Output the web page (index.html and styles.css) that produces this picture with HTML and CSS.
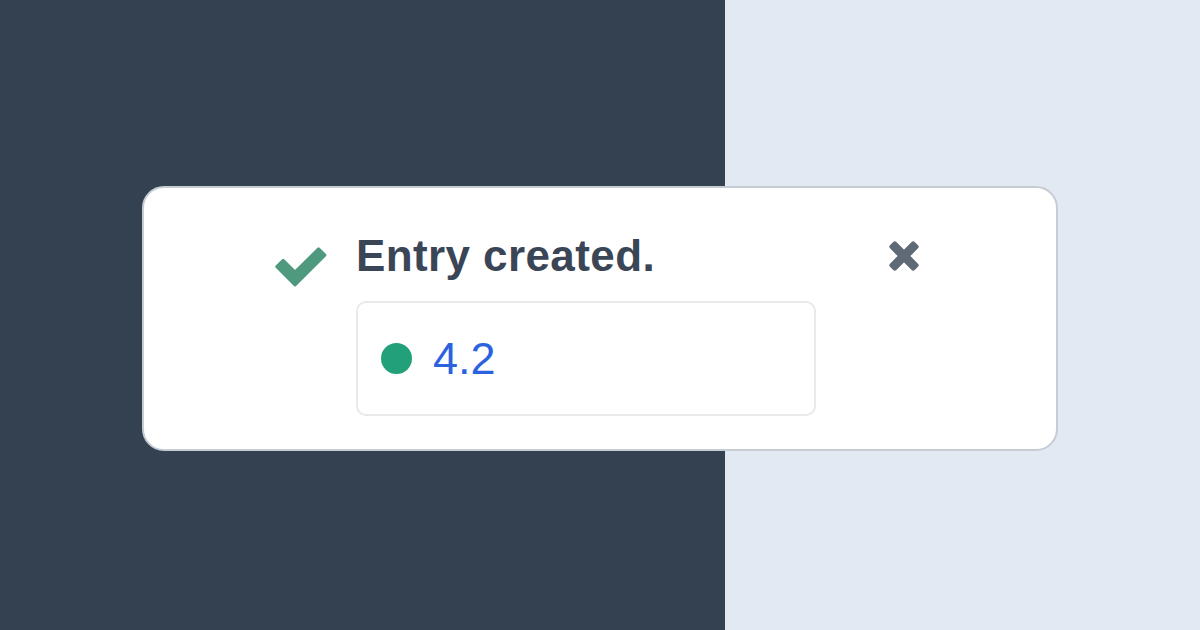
FILE: index.html
```html
<!DOCTYPE html>
<html lang="en">
<head>
<meta charset="utf-8">
<title>Entry created</title>
<link rel="stylesheet" href="styles.css">
</head>
<body>
<div class="toast">
  <svg class="check" width="58" height="50" viewBox="0 0 58 50" aria-hidden="true">
    <polygon points="13.18,20.32 25,32.14 48.52,8.82 54.88,15.18 25,44.96 6.82,26.68" fill="#4f9a7f" stroke="#4f9a7f" stroke-width="3" stroke-linejoin="round"/>
  </svg>
  <div class="content">
    <div class="title">Entry created.</div>
    <div class="entry">
      <span class="dot"></span>
      <span class="value">4.2</span>
    </div>
  </div>
  <svg class="close" width="32" height="32" viewBox="0 0 32 32" aria-hidden="true">
    <rect x="-1.5" y="11.5" width="35" height="9" rx="2.2" fill="#5f6a76" transform="rotate(45 16 16)"/>
    <rect x="-1.5" y="11.5" width="35" height="9" rx="2.2" fill="#5f6a76" transform="rotate(-45 16 16)"/>
  </svg>
</div>
</body>
</html>
```

FILE: styles.css
```css
html, body {
  margin: 0;
  padding: 0;
}

body {
  width: 1200px;
  height: 630px;
  overflow: hidden;
  background: linear-gradient(to right, #334150 0, #334150 725px, #e2e9f3 725px, #e2e9f3 100%);
  display: flex;
  align-items: center;
  justify-content: center;
  font-family: "Liberation Sans", Arial, sans-serif;
}

.toast {
  box-sizing: border-box;
  width: 916px;
  height: 265px;
  margin-top: 7px;
  background: #ffffff;
  border: 2px solid #c6ccd4;
  border-radius: 22px;
  padding: 42px 136px 33px 126px;
  display: flex;
  align-items: flex-start;
}

.check {
  flex: none;
  margin-top: 10px;
  margin-right: 28px;
}

.content {
  width: 460px;
  display: flex;
  flex-direction: column;
}

.title {
  font-size: 44px;
  line-height: 52px;
  font-weight: 700;
  color: #3a4656;
  letter-spacing: 0.4px;
  margin-bottom: 19px;
}

.entry {
  box-sizing: border-box;
  height: 115px;
  border: 2px solid #e8e9eb;
  border-radius: 10px;
  padding-left: 23px;
  display: flex;
  align-items: center;
}

.dot {
  flex: none;
  width: 31px;
  height: 31px;
  border-radius: 50%;
  background: #22a07a;
  margin-right: 21px;
}

.value {
  font-size: 45px;
  line-height: 52px;
  color: #2b63df;
}

.close {
  flex: none;
  margin-left: auto;
  margin-top: 10px;
}
```
